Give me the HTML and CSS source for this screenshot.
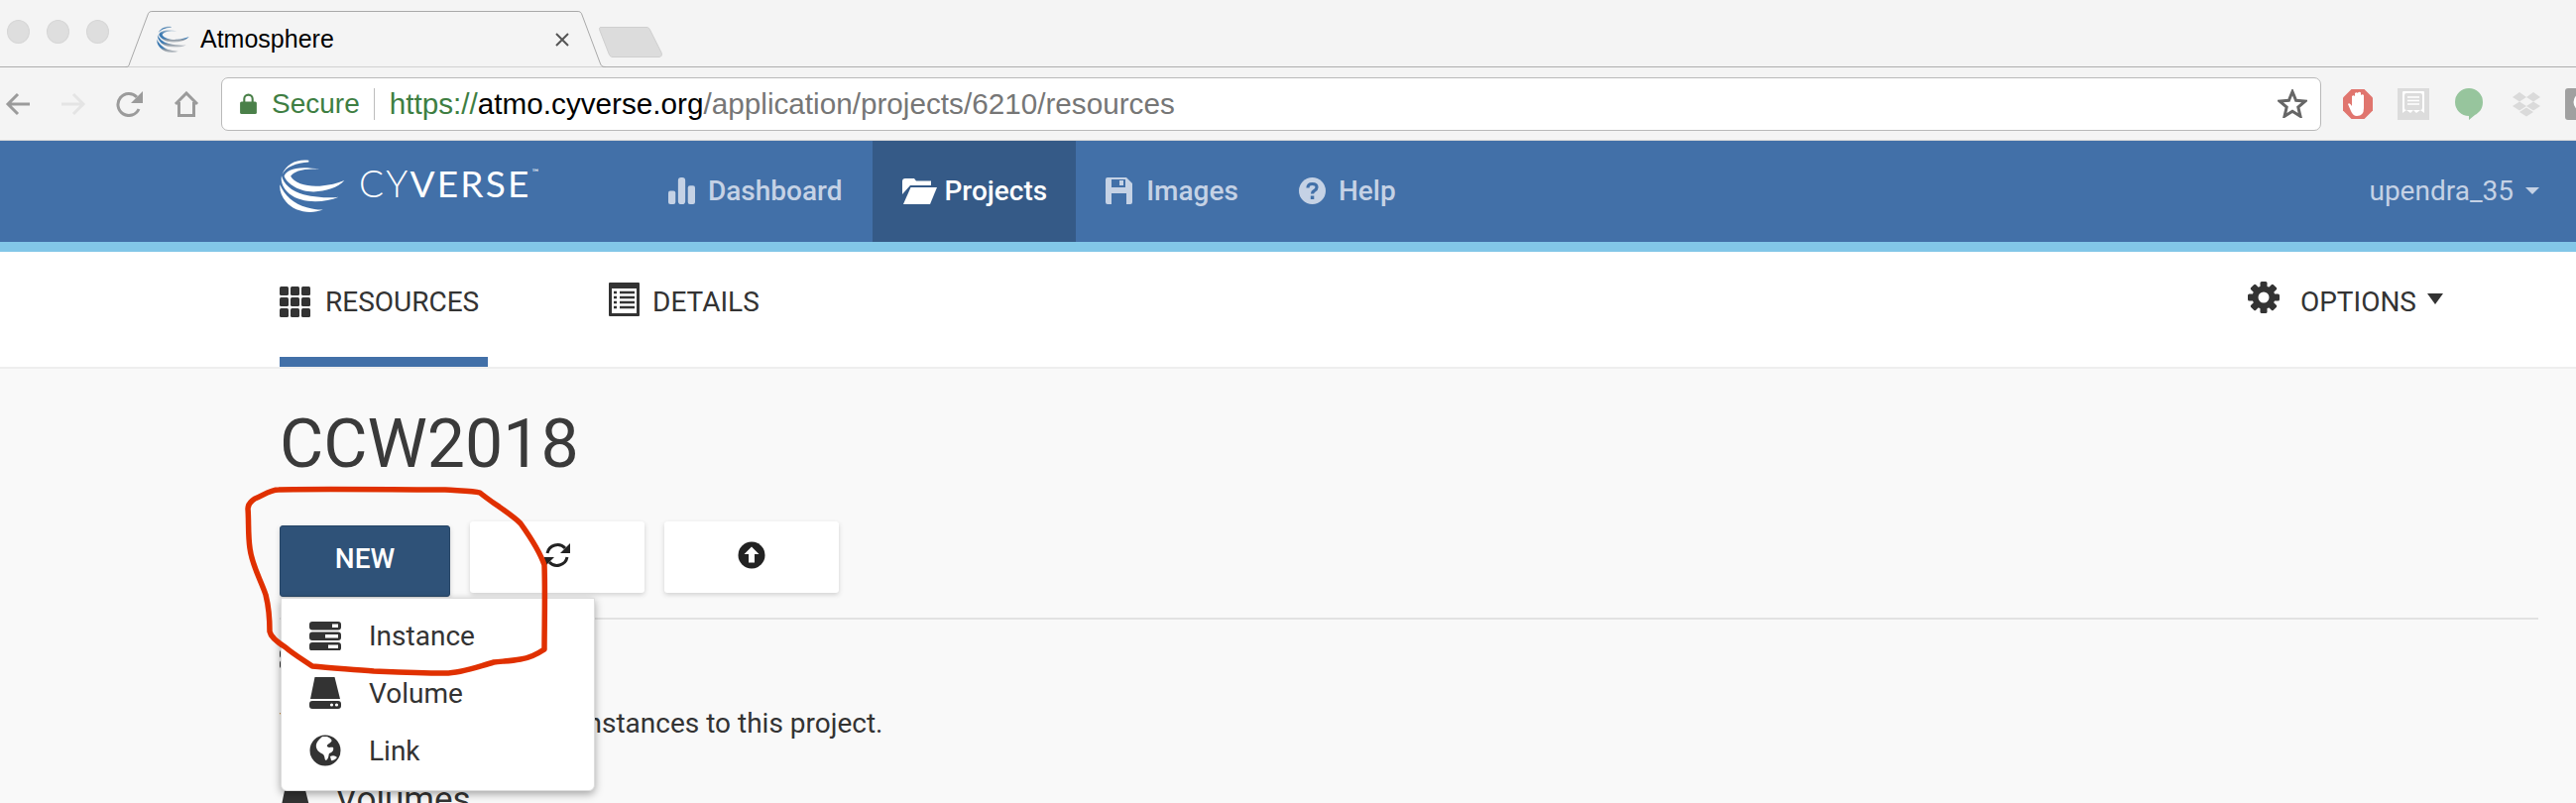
FILE: index.html
```html
<!DOCTYPE html>
<html lang="en">
<head>
<meta charset="utf-8">
<title>Atmosphere</title>
<link rel="stylesheet" href="styles.css">
</head>
<body>
<svg class="defs" width="0" height="0">
  <defs>
    <linearGradient id="favgrad" x1="0" y1="0" x2="0" y2="1">
      <stop offset="0" stop-color="#9db4c8"/>
      <stop offset="0.3" stop-color="#3b78b0"/>
      <stop offset="0.65" stop-color="#3f7db5"/>
      <stop offset="0.8" stop-color="#8d98a3"/>
      <stop offset="1" stop-color="#c9cdd1"/>
    </linearGradient>
  </defs>
  <symbol id="swirl" viewBox="36 28 202 170">
    <path d="M236 95C212 124 150 136 110 126C80 118 57 101 50 82C56 60 92 48 160 60C112 56 78 66 70 82C82 104 122 115 160 112C190 110 214 104 236 95Z"/>
    <path d="M218 146C172 165 102 166 66 136C48 120 38 100 42 80C48 105 72 128 110 138C150 147 190 150 218 146Z"/>
    <path d="M170 185C130 201 80 191 55 160C42 145 35 125 37 108C50 140 80 168 120 178C140 183 155 186 170 185Z"/>
    <path d="M126 33C90 28 56 44 44 76C56 52 86 41 126 38Z"/>
  </symbol>
</svg>
<div class="tabstrip">
  <div class="lights"><i class="light"></i><i class="light"></i><i class="light"></i></div>
  <div class="tab">
    <svg class="tab-shape" viewBox="0 0 485 57"><path d="M0 56.500H1C4 56.500 4 55 5 52L23 4C24 1 25 .5 28 .5H456C459 .5 460 1 461 4L479 52C480 55 481 56.500 484 56.500H485" fill="#f4f4f4" stroke="#a9a9a9"/></svg>
    <svg class="favicon"><use href="#swirl"/></svg>
    <span class="tab-title">Atmosphere</span>
    <svg class="tab-close" viewBox="0 0 14 14"><path d="M1 1L13 13M13 1L1 13" stroke="#555" stroke-width="2" fill="none"/></svg>
  </div>
  <svg class="newtab" viewBox="0 0 64 31"><path d="M2 0.500H48C50 .5 51 1.500 52 4L63 26C64 29 63 30.500 60 30.500H14C12 30.500 11 29.500 10 27L1 4C0 1.500 .5 .5 2 .5Z" fill="#dcdcdc" stroke="#cfcfcf"/></svg>
</div>
<div class="toolbar">
  <svg class="tool tool-back" viewBox="0 0 26 24"><path d="M25 12H3M13 2L3 12L13 22" fill="none" stroke="#9b9b9b" stroke-width="3"/></svg>
  <svg class="tool tool-forward" viewBox="0 0 26 24"><path d="M1 12H23M13 2L23 12L13 22" fill="none" stroke="#e4e4e4" stroke-width="3"/></svg>
  <svg class="tool tool-reload" viewBox="0 0 28 26"><path d="M23 18A11 11 0 1 1 21 6" fill="none" stroke="#9b9b9b" stroke-width="3"/><path d="M27 0V12H15Z" fill="#9b9b9b"/></svg>
  <svg class="tool tool-home" viewBox="0 0 26 26"><path d="M2 13L13 2L24 13M5.500 11V24.500H20.500V11" fill="none" stroke="#9b9b9b" stroke-width="3"/></svg>
  <div class="omnibox">
    <svg class="lock" viewBox="0 0 16 20"><path d="M4 9V5.500A4 4 0 0 1 12 5.500V9" fill="none" stroke="#4a8049" stroke-width="2"/><rect x="0" y="8" width="16" height="12" rx="1.500" fill="#4a8049"/></svg>
    <span class="secure">Secure</span>
    <i class="omni-sep"></i>
    <span class="url"><span class="url-scheme">https://</span><span class="url-host">atmo.cyverse.org</span>/application/projects/6210/resources</span>
    <svg class="star" viewBox="0 0 30 29"><path d="M15 2.500L18.600 11.300L28 12L20.800 18.100L23 27.300L15 22.300L7 27.300L9.200 18.100L2 12L11.400 11.300Z" fill="none" stroke="#666" stroke-width="3"/></svg>
  </div>
  <div class="extensions">
    <svg class="ext ext-abp" viewBox="0 0 32 32"><path d="M9.500 1H22.500L31 9.500V22.500L22.500 31H9.500L1 22.500V9.500Z" fill="#e0756e"/><path d="M10 15V8Q11.500 6.500 13 8V5Q14.500 3.500 16 5V4.500Q17.500 3 19 4.500V7Q20.500 5.500 22 7V20Q22 28 15 28Q11 28 9 23L6 16Q7.500 14 10 18Z" fill="#fff"/></svg>
    <svg class="ext ext-receipt" viewBox="0 0 32 32"><rect width="32" height="32" fill="#dcdcdc"/><path d="M5 4Q5 3 6 3H26Q27 3 27 4V25L23 22L19 25L16 22L13 25L9 22L5 25Z" fill="#fff"/><rect x="7" y="5" width="18" height="17" rx="2" fill="#dcdcdc"/><path d="M10 9H22M10 12.500H22M10 16H22" stroke="#fff" stroke-width="1.500"/></svg>
    <svg class="ext ext-bubble" viewBox="0 0 28 32"><path d="M14 0A14 14 0 0 1 28 14C28 21 24 25 20 27L14 32V28A14 14 0 0 1 14 0Z" fill="#97c59d"/></svg>
    <svg class="ext ext-dropbox" viewBox="0 0 30 26"><path d="M8 1L15 6L8 10.500L1 6ZM22 1L29 6L22 10.500L15 6ZM8 10.500L15 15L8 19.500L1 15ZM22 10.500L29 15L22 19.500L15 15ZM15 16.500L22 21L15 25.500L8 21Z" fill="#dadada"/></svg>
    <div class="ext-box"><svg viewBox="0 0 24 32"><circle cx="18" cy="14" r="8" fill="none" stroke="#fff" stroke-width="3"/></svg></div>
  </div>
</div>
<header class="appbar">
  <div class="brand">
    <svg class="brand-mark"><use href="#swirl"/></svg>
    <span class="brand-name"><span class="brand-light">CY</span>VERSE<sup class="brand-tm">™</sup></span>
  </div>
  <nav class="mainnav">
    <a class="navitem">
      <svg class="navicon" viewBox="0 0 26 26"><rect x="0" y="13" width="7" height="13" rx="2"/><rect x="9.500" y="0" width="7" height="26" rx="3"/><rect x="19" y="8" width="7" height="18" rx="2"/></svg>
      Dashboard
    </a>
    <a class="navitem navitem-active">
      <svg class="navicon navicon-folder" viewBox="0 0 35 26"><path d="M3 0H12L14 2.500H29V7H8L0 16V3Q0 0 3 0Z"/><path d="M8.500 9H35L28 26H1Z"/></svg>
      Projects
    </a>
    <a class="navitem">
      <svg class="navicon navicon-disk" viewBox="0 0 27 27"><path fill-rule="evenodd" d="M2 0H21L27 6V25Q27 27 25 27H2Q0 27 0 25V2Q0 0 2 0ZM6 2V10H20V2ZM6 16V27H21V16Z"/><rect x="14" y="3" width="4" height="5"/></svg>
      Images
    </a>
    <a class="navitem">
      <svg class="navicon" viewBox="0 0 27 27"><circle cx="13.500" cy="13.500" r="13.500"/><path d="M9 10.500Q9 6.500 13.500 6.500Q18 6.500 18 10Q18 12 15.500 13.500Q13.500 14.500 13.500 16.500" fill="none" stroke="#4270a8" stroke-width="3.200"/><rect x="11.800" y="18.500" width="3.500" height="3.500" fill="#4270a8"/></svg>
      Help
    </a>
  </nav>
  <a class="usermenu">upendra_35<i class="usercaret"></i></a>
</header>
<div class="subnav">
  <a class="subtab subtab-active">
    <svg class="subicon" viewBox="0 0 31 31"><rect width="9" height="9" rx="1.500"/><rect x="11" width="9" height="9" rx="1.500"/><rect x="22" width="9" height="9" rx="1.500"/><rect y="11" width="9" height="9" rx="1.500"/><rect x="11" y="11" width="9" height="9" rx="1.500"/><rect x="22" y="11" width="9" height="9" rx="1.500"/><rect y="22" width="9" height="9" rx="1.500"/><rect x="11" y="22" width="9" height="9" rx="1.500"/><rect x="22" y="22" width="9" height="9" rx="1.500"/></svg>
    RESOURCES
  </a>
  <a class="subtab subtab-details">
    <svg class="subicon subicon-list" viewBox="0 0 31 34"><rect width="31" height="34" rx="1" fill="#333"/><rect x="3" y="6" width="25" height="25" fill="#fff"/><path d="M5 10H8M11 10H26M5 15H8M11 15H26M5 20H8M11 20H26M5 25H8M11 25H26" stroke="#333" stroke-width="2.500"/></svg>
    DETAILS
  </a>
  <a class="options">
    <svg class="gear" viewBox="0 0 32 32"><g fill="#333"><rect x="12.500" y="0" width="7" height="32" rx="1.500"/><rect x="12.500" y="0" width="7" height="32" rx="1.500" transform="rotate(45 16 16)"/><rect x="12.500" y="0" width="7" height="32" rx="1.500" transform="rotate(90 16 16)"/><rect x="12.500" y="0" width="7" height="32" rx="1.500" transform="rotate(135 16 16)"/></g><circle cx="16" cy="16" r="8.500" fill="none" stroke="#333" stroke-width="6"/><circle cx="16" cy="16" r="5.500" fill="#fff"/></svg>
    OPTIONS<i class="optcaret"></i>
  </a>
</div>
<main class="content">
  <h1 class="title">CCW2018</h1>
  <div class="actions">
    <div class="newwrap">
      <button class="btn btn-new">NEW</button>
      <div class="menu">
        <a class="menuitem">
          <svg class="menuicon" viewBox="0 0 32 29"><g fill="#333"><rect width="32" height="8.500" rx="3"/><rect y="10.500" width="32" height="8.500" rx="3"/><rect y="21" width="32" height="8.500" rx="3"/></g><g fill="#fff"><rect x="23" y="2.500" width="6" height="3.500"/><rect x="16" y="13" width="13" height="3.500"/><rect x="19" y="23.500" width="10" height="3.500"/></g></svg>
          Instance
        </a>
        <a class="menuitem">
          <svg class="menuicon menuicon-tall" viewBox="0 0 32 32"><path d="M5.500 0H25.500L31 22H1Z" fill="#333"/><rect y="24" width="32" height="8" rx="3" fill="#333"/><circle cx="22.500" cy="28" r="1.600" fill="#fff"/><circle cx="27.500" cy="28" r="1.600" fill="#fff"/></svg>
          Volume
        </a>
        <a class="menuitem">
          <svg class="menuicon menuicon-tall" viewBox="0 0 32 32"><circle cx="16" cy="16" r="15.500" fill="#333"/><path d="M13 2C10 5 6 8 7 13C8 17 11 18 14 20C16 22 15 26 17 26C20 24 19 21 20 19C23 18 25 16 24 13C22 12 20 14 18 12C17 10 21 9 22 7C24 6 20 2 17 2Z" fill="#fff"/><path d="M21 22Q25 20 28 23Q25 27 22 26Z" fill="#fff"/></svg>
          Link
        </a>
      </div>
    </div>
    <button class="btn btn-plain">
      <svg class="btnicon" viewBox="0 0 28 28"><path d="M4 12A10.500 10.500 0 0 1 22 7" fill="none" stroke="#222" stroke-width="3"/><path d="M27 2V12H17Z" fill="#222"/><path d="M24 16A10.500 10.500 0 0 1 6 21" fill="none" stroke="#222" stroke-width="3"/><path d="M1 26V16H11Z" fill="#222"/></svg>
    </button>
    <button class="btn btn-plain">
      <svg class="btnicon" viewBox="0 0 28 28"><circle cx="14" cy="14" r="13.500" fill="#222"/><path d="M14 5.500L21.500 13H17V21.500H11V13H6.500Z" fill="#fff"/></svg>
    </button>
  </div>
  <hr class="rule">
  <h2 class="section section-first"><svg class="section-icon" viewBox="0 0 32 29"><g fill="#333"><rect width="32" height="8.500" rx="3"/><rect y="10.500" width="32" height="8.500" rx="3"/><rect y="21" width="32" height="8.500" rx="3"/></g></svg>Instances</h2>
  <p class="note">You have not added any instances to this project.</p>
  <h2 class="section"><svg class="section-icon section-icon-vol" viewBox="0 0 32 32"><path d="M5.500 0H25.500L31 22H1Z" fill="#333"/><rect y="24" width="32" height="8" rx="3" fill="#333"/></svg>Volumes</h2>
</main>
<svg class="annotation" viewBox="0 0 2598 810"><path d="M250 513C250 508 254 505 257 503C265 500 272 494 281 494C320 493 400 494 449 494C465 495 478 495 484 497C496 507 515 518 525 528C535 542 545 558 549 570C550 600 549 630 549 655C540 661 533 664 525 665C514 667 505 667 498 668C480 673 465 679 449 679C420 679 400 678 377 677C355 675 335 674 315 672C305 665 296 660 288 653C280 648 273 643 272 637C272 625 271 612 268 600C263 585 254 570 252 553C250 540 251 525 250 513Z" fill="none" stroke="#e03000" stroke-width="5.500" stroke-linejoin="round"/></svg>
</body>
</html>
```
FILE: styles.css
```css
* { box-sizing: border-box; }
html, body { margin: 0; padding: 0; }
body { width: 2598px; height: 810px; overflow: hidden; background: #f9f9f9; font-family: Roboto, "Liberation Sans", sans-serif; color: #333; position: relative; }
.defs { position: absolute; }
a { display: flex; align-items: center; text-decoration: none; color: inherit; }

.tabstrip { display: flex; align-items: flex-start; height: 68px; background: #f4f4f4; border-bottom: 1px solid #aeaeae; font-family: "Liberation Sans", Arial, sans-serif; }
.lights { display: flex; gap: 17px; margin: 20px 0 0 7px; }
.light { width: 23px; height: 24px; border-radius: 50%; background: #dedede; border: 1px solid #d6d6d6; }
.tab { position: relative; display: flex; align-items: center; width: 485px; height: 57px; margin: 11px 0 0 16px; padding-left: 32px; }
.tab-shape { position: absolute; left: 0; top: 0; width: 485px; height: 57px; }
.favicon { position: relative; width: 33px; height: 28px; fill: url(#favgrad); flex: none; }
.tab-title { position: relative; margin-left: 11px; font-size: 25px; color: #000; }
.tab-close { position: relative; width: 14px; height: 14px; margin-left: 223px; }
.newtab { width: 64px; height: 31px; margin: 27px 0 0 -7px; }

.toolbar { display: flex; align-items: center; height: 74px; background: #f4f4f4; border-bottom: 1px solid #d8d8d8; font-family: "Liberation Sans", Arial, sans-serif; }
.tool { flex: none; }
.tool-back { width: 26px; height: 24px; margin-left: 5px; }
.tool-forward { width: 26px; height: 24px; margin-left: 30px; }
.tool-reload { width: 28px; height: 26px; margin-left: 30px; }
.tool-home { width: 26px; height: 26px; margin-left: 30px; }
.omnibox { display: flex; align-items: center; flex: none; width: 2118px; height: 54px; margin-left: 22px; padding-left: 18px; background: #fff; border: 1px solid #b9b9b9; border-radius: 7px; }
.lock { width: 17px; height: 21px; flex: none; }
.secure { margin-left: 15px; font-size: 28px; color: #3e7e42; }
.omni-sep { width: 1px; height: 32px; margin: 0 15px 0 14px; background: #bdbdbd; }
.url { font-size: 29.700px; color: #767676; white-space: nowrap; }
.url-scheme { color: #3e7e42; }
.url-host { color: #000; }
.star { width: 30px; height: 29px; margin-left: auto; margin-right: 13px; }
.extensions { display: flex; align-items: center; flex: none; margin-left: 21px; }
.ext { flex: none; }
.ext-abp { width: 32px; height: 32px; margin-left: 0; }
.ext-receipt { width: 32px; height: 32px; margin-left: 24px; }
.ext-bubble { width: 28px; height: 32px; margin-left: 26px; }
.ext-dropbox { width: 30px; height: 26px; margin-left: 29px; }
.ext-box { flex: none; width: 40px; height: 32px; margin-left: 24px; background: #a0a0a0; border-radius: 3px; }
.ext-box svg { display: block; width: 24px; height: 32px; }

.appbar { display: flex; align-items: stretch; height: 112px; padding-left: 282px; padding-right: 37px; background: #4270a8; border-bottom: 10px solid #82c7e8; }
.brand { display: flex; align-items: flex-start; width: 362px; flex: none; }
.brand-mark { width: 66px; height: 56px; margin-top: 18px; fill: #fff; flex: none; }
.brand-name { margin: 22px 0 0 14px; font-family: Lato, sans-serif; font-size: 37px; line-height: 42px; font-weight: 400; letter-spacing: 2.200px; color: #fff; white-space: nowrap; }
.brand-light { font-weight: 300; }
.brand-tm { font-size: 9px; line-height: 0; vertical-align: 22px; margin-left: 1px; letter-spacing: 0; }
.mainnav { display: flex; align-items: stretch; }
.navitem { padding: 0 31px 1px 30px; font-size: 28px; font-weight: 500; color: #c5d2e5; }
.navitem-active { padding-right: 29px; background: #355a87; color: #fff; }
.navicon { width: 27px; height: 27px; margin-right: 13px; fill: currentColor; flex: none; }
.navicon-folder { width: 35px; height: 26px; margin-right: 7px; }
.navicon-disk { margin-right: 14px; }
.usermenu { margin-left: auto; padding-bottom: 1px; font-size: 28px; color: #c5d2e5; }
.usercaret { width: 0; height: 0; margin-left: 12px; border-left: 7px solid transparent; border-right: 7px solid transparent; border-top: 7px solid #c5d2e5; }

.subnav { display: flex; align-items: stretch; height: 118px; padding: 0 134px 0 282px; background: #fff; border-bottom: 2px solid #eee; }
.subtab { width: 210px; font-size: 28px; color: #333; padding-bottom: 6px; border-bottom: 10px solid transparent; }
.subtab-active { border-bottom-color: #4270a8; }
.subtab-details { margin-left: 122px; }
.subicon { width: 31px; height: 31px; margin-right: 15px; fill: #333; flex: none; }
.subicon-list { height: 34px; margin-right: 13px; margin-top: -5px; }
.options { margin-left: auto; font-size: 28px; padding-bottom: 16px; }
.gear { width: 32px; height: 32px; margin-right: 21px; margin-top: -8px; flex: none; }
.optcaret { width: 0; height: 0; margin-left: 11px; margin-top: -6px; border-left: 8px solid transparent; border-right: 8px solid transparent; border-top: 11px solid #333; }

.content { padding: 0 38px 0 282px; }
.title { margin: 36px 0 0; font-size: 68px; line-height: 80px; font-weight: 400; color: #3a3a3a; }
.actions { display: flex; align-items: flex-start; gap: 20px; margin-top: 38px; height: 76px; }
.newwrap { position: relative; margin-top: 4px; }
.btn { display: flex; align-items: center; justify-content: center; width: 176px; height: 72px; padding: 0; border: 0; border-radius: 3px; background: #fff; font-family: Roboto, sans-serif; box-shadow: 0 2px 5px rgba(0, 0, 0, 0.16); }
.btn-new { width: 172px; background: #2f5278; border: 1px solid #264566; color: #fff; font-size: 28px; font-weight: 500; padding-bottom: 5px; }
.btn-plain { padding-bottom: 4px; }
.btnicon { width: 28px; height: 28px; }
.menu { position: absolute; left: 1px; top: 73px; z-index: 2; width: 317px; height: 195px; padding-top: 8px; background: #fff; border: 1px solid #ddd; border-radius: 0 0 6px 6px; box-shadow: 0 3px 8px rgba(0, 0, 0, 0.35); }
.menuitem { height: 58px; padding-left: 28px; font-size: 28px; color: #333; }
.menuicon { width: 32px; height: 29px; margin-right: 28px; flex: none; }
.menuicon-tall { height: 32px; }
.rule { height: 2px; margin: 21px 0 0; border: 0; background: #e2e2e2; }
.section { display: flex; align-items: center; margin: 0; font-size: 35px; line-height: 42px; font-weight: 400; color: #333; }
.section-first { margin-top: 13px; }
.section-icon { width: 32px; height: 29px; margin-right: 24px; flex: none; }
.section-icon-vol { height: 32px; margin-top: 8px; }
.note { margin: 32px 0 0; font-size: 28px; line-height: 36px; color: #333; white-space: nowrap; }
.note + .section { margin-top: 38px; }
.annotation { position: absolute; left: 0; top: 0; width: 2598px; height: 810px; z-index: 3; pointer-events: none; }
```
